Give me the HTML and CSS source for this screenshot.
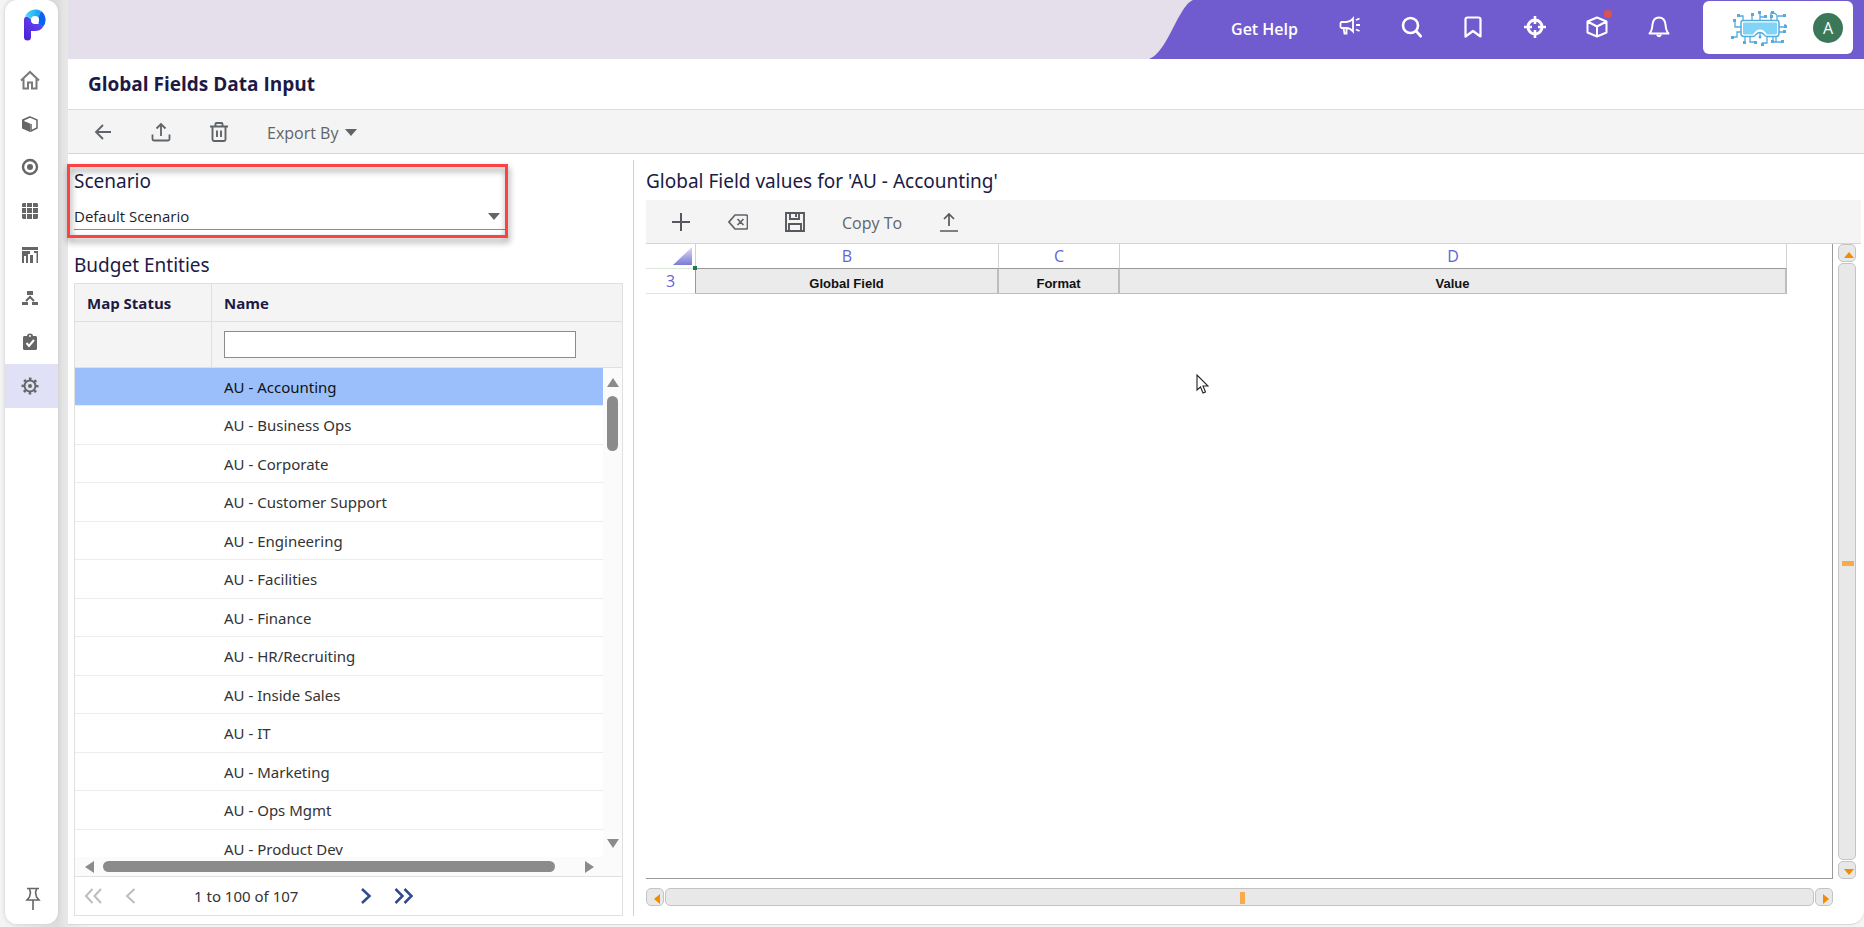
FILE: index.html
```html
<!DOCTYPE html>
<html lang="en">
<head>
<meta charset="utf-8">
<title>Global Fields Data Input</title>
<link rel="stylesheet" href="styles.css">
</head>
<body>
<nav class="sidebar" aria-label="Main">
  <a class="logo" href="#" aria-label="Home page">
    <svg width="22" height="32" viewBox="0 0 22 32">
      <defs>
        <linearGradient id="stem" x1="0" y1="1" x2="1" y2="0"><stop offset="0" stop-color="#4a1fd0"/><stop offset="1" stop-color="#6a4dff"/></linearGradient>
        <linearGradient id="arc" x1="0" y1="0" x2="1" y2="0"><stop offset="0" stop-color="#55dcf8"/><stop offset="1" stop-color="#0a9cf5"/></linearGradient>
      </defs>
      <path d="M0 11C0 8 2 7 4 8l4 3 3 4 5 0 3 3c-2 3-5 4-8 4H7v6a3.500 3.500 0 0 1-7 0z" fill="url(#stem)"/>
      <path d="M1 8A11 11 0 0 1 17 2L14 9a4 4 0 0 0-7 2C6 8 4 7 1 8z" fill="url(#arc)"/>
      <path d="M17 2a11 11 0 0 1 2 16l-5-4a4 4 0 0 0 0-5z" fill="#0b62f5"/>
      <circle cx="11" cy="11" r="4" fill="#fff"/>
    </svg>
  </a>
  <a class="nav-item" href="#" aria-label="Home"><svg width="20" height="20" viewBox="0 0 20 20" fill="none" stroke="#7a7a7a" stroke-width="2"><path d="M1 10.500 10 2l9 8.500M3.500 9v9.500H8v-6h4v6h4.500V9"/></svg></a>
  <a class="nav-item" href="#" aria-label="Models"><svg width="18" height="18" viewBox="0 0 18 18"><path d="M9 2 16 5v8l-6 3V9" fill="none" stroke="#666" stroke-width="1.500"/><path d="M9 1 1 4.500v9L9 17V8.500L3 6l6-3z" fill="#666"/><path d="m3 5.500 6-2.500 6 2.500L9 8z" fill="#fff"/></svg></a>
  <a class="nav-item" href="#" aria-label="Targets"><svg width="18" height="18" viewBox="0 0 18 18"><circle cx="9" cy="9" r="7" fill="none" stroke="#666" stroke-width="2.400"/><circle cx="9" cy="9" r="3" fill="#666"/></svg></a>
  <a class="nav-item" href="#" aria-label="Grids"><svg width="18" height="18" viewBox="0 0 18 18" fill="#666"><path d="M2 1h3v4H1V2zM6 1h5v4H6zM12 1h4l1 1v3h-5zM1 6h4v5H1zM6 6h5v5H6zM12 6h5v5h-5zM1 12h4v5H2l-1-1zM6 12h5v5H6zM12 12h5v4l-1 1h-4z"/></svg></a>
  <a class="nav-item" href="#" aria-label="Reports"><svg width="18" height="18" viewBox="0 0 18 18" fill="#666"><path d="M1 1h16v3H1zM1 5h8v3H7v9H5v-7H3v7H1zM9 9h3v8H9zM13 5h4v12h-1.500V7H13z"/></svg></a>
  <a class="nav-item" href="#" aria-label="Hierarchy"><svg width="18" height="18" viewBox="0 0 18 18" fill="#666"><path d="M6 2h6v4H6zM1 13h6v3H1zM11 13h6v3h-6z"/><path d="M9 7v2M5 12l4-4 4 4" fill="none" stroke="#666" stroke-width="2"/></svg></a>
  <a class="nav-item" href="#" aria-label="Tasks"><svg width="18" height="18" viewBox="0 0 18 18"><path d="M3 3h3a3 2.500 0 0 1 6 0h3l1 1v12l-1 1H3l-1-1V4z" fill="#666"/><path d="m5.500 10 2.500 3 5-6" fill="none" stroke="#fff" stroke-width="2"/><circle cx="9" cy="3" r="1" fill="#fff"/></svg></a>
  <a class="nav-item active" href="#" aria-label="Settings"><svg width="18" height="18" viewBox="0 0 18 18" fill="none" stroke="#666"><circle cx="9" cy="9" r="5.500" stroke-width="2"/><circle cx="9" cy="9" r="7.200" stroke-width="2.600" stroke-dasharray="2.500 3.155" stroke-dashoffset="1.250"/><circle cx="9" cy="9" r="2" fill="#666" stroke="none"/></svg></a>
  <button class="pin" aria-label="Pin menu"><svg width="16" height="24" viewBox="0 0 16 24" fill="none" stroke="#666" stroke-width="1.600"><path d="M2 1.500h12M4.500 2l1 3.500-1 4.500-2.500 3h12l-2.500-3-1-4.500 1-3.500M8 13v10"/></svg></button>
</nav>

<div class="app">
  <header class="topbar">
    <svg class="curve" width="44" height="59" viewBox="0 0 44 59" preserveAspectRatio="none"><path d="M0 59C14 54 24 26 31 15 35 8 39 2 44 0V59z" fill="#705ccf"/></svg>
    <div class="actions">
      <a class="help" href="#">Get Help</a>
      <button aria-label="Announcements"><svg width="22" height="22" viewBox="0 0 22 22" fill="none" stroke="#fff" stroke-width="1.800"><path d="M3.500 6h5C11 6 13 5 15 2.500v13C13 13 11 12 8.500 12h-5L2.500 11V7zM5.500 12l1 5.500h2V12M18 4l3.500-1.500M18 9h4M18 13.500l3.500 1.500"/></svg></button>
      <button aria-label="Search"><svg width="22" height="22" viewBox="0 0 22 22" fill="none" stroke="#fff" stroke-width="2.600"><circle cx="10.500" cy="9.500" r="7.500"/><path d="m16 15 5.500 6"/></svg></button>
      <button aria-label="Bookmarks"><svg width="22" height="22" viewBox="0 0 22 22" fill="none" stroke="#fff" stroke-width="2.200" stroke-linejoin="round"><path d="M3.500 20.500V3.500q0-2 2-2h11q2 0 2 2v17L11 15z"/></svg></button>
      <button aria-label="Locate"><svg width="22" height="22" viewBox="0 0 22 22" fill="none" stroke="#fff"><circle cx="11" cy="11" r="7" stroke-width="3"/><path d="M11 0v8M11 14v8M0 11h8M14 11h8" stroke-width="2.600"/></svg></button>
      <button aria-label="Packages"><svg width="22" height="22" viewBox="0 0 22 22" fill="none" stroke="#fff" stroke-width="2" stroke-linejoin="round"><path d="m11 1.500 9.500 4v11L11 20.500l-9.500-4v-11zM1.500 5.500l9.500 5 9.500-5M11 10.500v10"/></svg><span class="dot"></span></button>
      <button aria-label="Notifications"><svg width="22" height="22" viewBox="0 0 22 22" fill="none" stroke="#fff" stroke-width="2" stroke-linejoin="round"><path d="M1.500 17.500Q4 15 4.500 8.500C5 4 7.500 1.500 11 1.500s6 2.500 6.500 7q.5 6.500 3 9z"/><path d="M9 18.500q2 3.500 4 0"/></svg></button>
      <div class="account">
        <svg width="56" height="36" viewBox="0 0 56 36" fill="none" stroke="#54abdf" stroke-width="1.300">
          <path d="M12 10V6H7M12 17H4V11M10 22H6V27H1M14 26v7M19 26v6h6M36 26v7h-5M36 26v6M42 26v6h3M45 26v6h6M47 22h6M48 17h6v-3M46 14V6h7M40 10V3h3l3 2M40 10V6M29 10V3M29 7h5M21 10V4"/>
          <g fill="#54abdf" stroke="none"><path d="M6 4h3v3H6zM2 9h3v3H2zM0 26h3v3H0zM12 31h3v3h-3zM23 31h3v3h-3zM30 33h3v3h-3zM40 30h3v3h-3zM50 30h3v3h-3zM52 20h3v3h-3zM53 15h3v3h-3zM52 4h3v3h-3zM40 1h3v3h-3zM27 1h3v3h-3zM33 5h3v3h-3zM20 3h3v3h-3zM39 5h3v3h-3z"/></g>
          <path d="M12 10.500h34q2 0 2 2v11q0 3-3 3h-9q-2 0-3-2-4-4-8 0-1 2-3 2h-9q-3 0-3-3v-11q0-2 2-2z" fill="#fff" stroke-width="1.500"/>
          <path d="M13 12.500h32q1 0 1 1V23q0 1.500-2 1.500h-8q-3-5-7-5t-7 5h-8q-2 0-2-1.500v-9.500q0-1 1-1z" fill="#82d4f7" stroke="none"/>
          <path d="M29 22v6"/><circle cx="29" cy="27" r="1.500" fill="#54abdf" stroke="none"/>
        </svg>
        <button class="avatar" aria-label="Account">A</button>
      </div>
    </div>
  </header>

  <h1 class="title">Global Fields Data Input</h1>

  <div class="toolbar page-tools">
    <button aria-label="Back"><svg width="20" height="20" viewBox="0 0 20 20" fill="none" stroke="#5f6469" stroke-width="1.800"><path d="M18 10H3M10 3l-7 7 7 7"/></svg></button>
    <button aria-label="Upload"><svg width="20" height="20" viewBox="0 0 20 20" fill="none" stroke="#5f6469" stroke-width="1.800"><path d="M10 14V2M5.500 6.500 10 2l4.500 4.500M1.500 12.500V17q0 1.500 1.500 1.500h14q1.500 0 1.500-1.500v-4.500"/></svg></button>
    <button aria-label="Delete"><svg width="20" height="20" viewBox="0 0 20 20" fill="none" stroke="#5f6469" stroke-width="1.900"><path d="M1 4.500h18M6.500 4V2q0-1 1-1h5q1 0 1 1v2M3.500 5v12.500q0 1.500 1.500 1.500h10q1.500 0 1.500-1.500V5M8 8.500V15M12 8.500V15"/></svg></button>
    <button class="text">Export By <svg width="12" height="7" viewBox="0 0 12 7"><path d="M0 0h12L6 7z" fill="#5f6469"/></svg></button>
  </div>

  <main class="panes">
    <section class="left">
      <div class="scenario">
        <label class="heading" for="scenario">Scenario</label>
        <div class="select">
          <select id="scenario"><option>Default Scenario</option></select>
          <svg width="12" height="7" viewBox="0 0 12 7"><path d="M0 0h12L6 7z" fill="#5f656a"/></svg>
        </div>
        <span class="callout"></span>
      </div>
      <h2 class="heading entities-title">Budget Entities</h2>
      <div class="grid">
        <table class="grid-head">
          <colgroup><col class="col-status"><col></colgroup>
          <thead>
            <tr><th>Map Status</th><th>Name</th></tr>
            <tr class="filter"><td></td><td><input type="text" aria-label="Filter by name"></td></tr>
          </thead>
        </table>
        <div class="grid-body">
          <div class="rows">
            <table>
              <colgroup><col class="col-status"><col></colgroup>
              <tbody>
                <tr class="selected"><td></td><td>AU - Accounting</td></tr>
                <tr><td></td><td>AU - Business Ops</td></tr>
                <tr><td></td><td>AU - Corporate</td></tr>
                <tr><td></td><td>AU - Customer Support</td></tr>
                <tr><td></td><td>AU - Engineering</td></tr>
                <tr><td></td><td>AU - Facilities</td></tr>
                <tr><td></td><td>AU - Finance</td></tr>
                <tr><td></td><td>AU - HR/Recruiting</td></tr>
                <tr><td></td><td>AU - Inside Sales</td></tr>
                <tr><td></td><td>AU - IT</td></tr>
                <tr><td></td><td>AU - Marketing</td></tr>
                <tr><td></td><td>AU - Ops Mgmt</td></tr>
                <tr><td></td><td>AU - Product Dev</td></tr>
              </tbody>
            </table>
          </div>
          <div class="vscroll">
            <svg width="12" height="9" viewBox="0 0 12 9"><path d="M6 0l6 9H0z" fill="#8b8b8b"/></svg>
            <span class="thumb"></span>
            <svg class="end" width="12" height="9" viewBox="0 0 12 9"><path d="M0 0h12L6 9z" fill="#8b8b8b"/></svg>
          </div>
        </div>
        <div class="hscroll">
          <svg width="9" height="12" viewBox="0 0 9 12"><path d="M9 0v12L0 6z" fill="#8b8b8b"/></svg>
          <span class="thumb"></span>
          <svg class="end" width="9" height="12" viewBox="0 0 9 12"><path d="M0 0v12l9-6z" fill="#8b8b8b"/></svg>
        </div>
        <div class="pager">
          <button disabled aria-label="First page"><svg width="18" height="16" viewBox="0 0 18 16" fill="none" stroke="#bdbdbd" stroke-width="2"><path d="M8.500 1 2 8l6.500 7M17 1l-6.500 7 6.500 7"/></svg></button>
          <button disabled aria-label="Previous page"><svg width="12" height="16" viewBox="0 0 12 16" fill="none" stroke="#bdbdbd" stroke-width="2"><path d="M10.500 1 3 8l7.500 7"/></svg></button>
          <span class="range">1 to 100 of 107</span>
          <button aria-label="Next page"><svg width="12" height="16" viewBox="0 0 12 16" fill="none" stroke="#2f4a92" stroke-width="2.500"><path d="m2 1 7.500 7L2 15"/></svg></button>
          <button aria-label="Last page"><svg width="20" height="16" viewBox="0 0 20 16" fill="none" stroke="#2f4a92" stroke-width="2.500"><path d="m1.500 1 7 7-7 7M10.500 1l7 7-7 7"/></svg></button>
        </div>
      </div>
    </section>

    <section class="right">
      <h2 class="heading">Global Field values for 'AU - Accounting'</h2>
      <div class="toolbar sheet-tools">
        <button aria-label="Add"><svg width="20" height="20" viewBox="0 0 20 20" fill="none" stroke="#55595d" stroke-width="2"><path d="M10 1v18M1 10h18"/></svg></button>
        <button aria-label="Clear"><svg width="20" height="20" viewBox="0 0 20 20" fill="none" stroke="#5f6469" stroke-width="1.700"><path d="M7 3h11q1.500 0 1.500 1.500v11q0 1.500-1.500 1.500H7l-6-7zM9.500 7l6 6M15.500 7l-6 6"/></svg></button>
        <button aria-label="Save"><svg width="20" height="20" viewBox="0 0 20 20" fill="none" stroke="#55595d" stroke-width="1.900"><path d="M1 1h18v18H1zM5 1v6h9V1M4 19v-7h12v7M11 2v3"/></svg></button>
        <button class="text">Copy To</button>
        <button aria-label="Export"><svg width="20" height="20" viewBox="0 0 20 20" fill="none" stroke="#55595d" stroke-width="1.700"><path d="M10 14V2M5 7l5-5 5 5M1 19h18"/></svg></button>
      </div>
      <div class="sheet">
        <div class="viewport">
          <table class="cells">
            <colgroup><col class="c-a"><col class="c-b"><col class="c-c"><col class="c-d"></colgroup>
            <thead><tr><th class="corner"><svg width="19" height="18" viewBox="0 0 19 18"><defs><linearGradient id="tri" x1="0" y1="0" x2="0" y2="1"><stop offset="0" stop-color="#dcdcf4"/><stop offset="1" stop-color="#7b7bd8"/></linearGradient></defs><path d="M19 0v18H0z" fill="url(#tri)"/></svg><span class="handle"></span></th><th>B</th><th>C</th><th>D</th></tr></thead>
            <tbody><tr><th>3</th><td>Global Field</td><td>Format</td><td>Value</td></tr></tbody>
          </table>
          <svg class="cursor" width="13" height="20" viewBox="0 0 13 20"><path d="M1 1v15l3.500-3 2.500 6 2.500-1-2.500-6H12z" fill="#fff" stroke="#222" stroke-width="1.100"/></svg>
        </div>
        <div class="bar vertical">
          <button aria-label="Scroll up"><svg width="10" height="6" viewBox="0 0 10 6"><path d="m5 0 5 6H0z" fill="#f28c00"/></svg></button>
          <div class="track"><span></span></div>
          <button aria-label="Scroll down"><svg width="10" height="6" viewBox="0 0 10 6"><path d="M0 0h10L5 6z" fill="#f28c00"/></svg></button>
        </div>
        <div class="bar horizontal">
          <button aria-label="Scroll left"><svg width="6" height="10" viewBox="0 0 6 10"><path d="M6 0v10L0 5z" fill="#f28c00"/></svg></button>
          <div class="track"><span></span></div>
          <button aria-label="Scroll right"><svg width="6" height="10" viewBox="0 0 6 10"><path d="M0 0v10l6-5z" fill="#f28c00"/></svg></button>
        </div>
      </div>
    </section>
  </main>
</div>
</body>
</html>
```
FILE: styles.css
```css
* { box-sizing: border-box; }
body {
  margin: 0;
  height: 100vh;
  display: flex;
  padding: 0 0 3px 5px;
  gap: 10px;
  background: linear-gradient(90deg, #f4f4f4 5px, #dedede 58px, #e9e9e9 68px, #f4f4f4 90px);
  font: 16px/22px "Open Sans", "Noto Sans", sans-serif;
  color: #333;
  overflow: hidden;
}
button {
  font: inherit;
  color: inherit;
  background: none;
  border: 0;
  padding: 0;
  cursor: pointer;
}
svg { display: block; flex: none; }
table { border-collapse: separate; border-spacing: 0; table-layout: fixed; }
th, td { padding: 0; text-align: left; }

.sidebar {
  flex: 0 0 53px;
  display: flex;
  flex-direction: column;
  background: #fff;
  border-radius: 12px;
  box-shadow: 0 0 4px #ccc;
}
.logo { display: flex; justify-content: center; padding: 9px 0 17px 6px; }
.nav-item {
  height: 44px;
  display: flex;
  align-items: center;
  justify-content: center;
  padding-right: 4px;
}
.nav-item:nth-child(3n) { height: 43px; }
.nav-item.active { height: 44px; background: #e0e0f6; }
.pin { margin: auto 0 13px; padding-left: 3px; display: flex; justify-content: center; }

.app {
  flex: 1;
  min-width: 0;
  display: flex;
  flex-direction: column;
  background: #fff;
  border-radius: 0 0 14px 0;
  box-shadow: 0 1px 1px #d5d5d5;
}
.topbar { display: flex; height: 59px; flex: none; background: #e5dfeb; }
.curve { margin-left: auto; }
.actions {
  display: flex;
  align-items: flex-start;
  gap: 40px;
  padding: 1px 11px 0 38px;
  background: #705ccf;
}
.actions > button { position: relative; margin-top: 15px; }
.help { margin-top: 17px; color: #fff; font-weight: 600; text-decoration: none; }
.dot {
  position: absolute;
  top: -6px;
  right: -4px;
  width: 8px;
  height: 8px;
  border-radius: 50%;
  background: #d9534f;
}
.account {
  display: flex;
  align-items: center;
  gap: 26px;
  height: 53px;
  margin-left: -7px;
  padding: 0 10px 0 28px;
  border-radius: 6px;
  background: #fff;
}
.avatar {
  width: 30px;
  height: 30px;
  border-radius: 50%;
  background: #3b7859;
  color: #fff;
  line-height: 30px;
}

.title {
  flex: none;
  margin: 0;
  padding: 0 20px;
  font-size: 19px;
  line-height: 50px;
  font-weight: 700;
  color: #1c1a45;
}
.toolbar { display: flex; align-items: center; background: #f4f4f4; color: #5f6469; flex: none; }
.toolbar .text { display: flex; align-items: center; gap: 7px; padding-top: 2px; font-weight: 500; }
.page-tools {
  height: 45px;
  gap: 38px;
  padding: 0 25px;
  border-top: 1px solid #dcdcdc;
  border-bottom: 1px solid #d5d5d5;
}
.sheet-tools { height: 44px; gap: 37px; padding: 0 25px; border-bottom: 1px solid #d5d5d5; }

.panes { flex: 1; min-height: 0; display: flex; padding: 6px 3px 8px 6px; }
.heading {
  display: block;
  margin: 0;
  font-family: "Noto Sans", "Open Sans", sans-serif;
  font-size: 19px;
  line-height: 24px;
  font-weight: 400;
  color: #1c1a45;
}
.left {
  flex: 0 0 560px;
  display: flex;
  flex-direction: column;
  padding-right: 10px;
  border-right: 1px solid #d0d0d0;
}
.scenario { position: relative; width: 431px; padding-top: 9px; }
.select {
  display: flex;
  align-items: center;
  height: 37px;
  padding: 10px 5px 0 0;
  border-bottom: 1px solid #8c8c8c;
}
.select select {
  flex: 1;
  appearance: none;
  border: 0;
  padding: 0;
  background: none;
  font: inherit;
  font-size: 15px;
  color: #1f1f1f;
}
.callout {
  position: absolute;
  inset: 4px -3px -8px -7px;
  border: 3px solid #fa4444;
  filter: drop-shadow(1px 4px 3px rgba(0, 0, 0, .45));
  pointer-events: none;
}
.entities-title { margin: 23px 0 6px; }

.grid { flex: 1; min-height: 0; display: flex; flex-direction: column; border: 1px solid #e0e0e0; }
.grid table { width: 100%; }
.col-status { width: 137px; }
.grid-head { flex: none; background: #f4f4f4; }
.grid-head th { height: 38px; font-size: 15px; font-weight: 700; color: #1c1a45; border-bottom: 1px solid #e0e0e0; }
.grid-head td { border-bottom: 1px solid #e0e0e0; }
.grid th, .grid td { padding: 0 12px; }
.grid-head tr > :first-child { border-right: 1px solid #e0e0e0; }
.filter { height: 46px; }
.filter input { display: block; width: calc(100% - 34px); height: 27px; border: 1px solid #8c8c8c; background: #fff; font: inherit; }
.grid-body { flex: 1; min-height: 0; display: flex; }
.rows { flex: 1; overflow: hidden; }
.rows td {
  height: 39px;
  border-bottom: 1px solid #ececec;
  font-family: "Noto Sans", "Open Sans", sans-serif;
  font-size: 15px;
  line-height: 20px;
  white-space: nowrap;
}
.rows tr:nth-child(odd) td { height: 38px; }
.selected { background: #9bbffb; color: #111; }
.vscroll { flex: 0 0 19px; display: flex; flex-direction: column; align-items: center; gap: 9px; padding: 10px 0 9px; background: #fbfbfb; }
.vscroll .thumb { width: 11px; height: 55px; border-radius: 6px; background: #8b8b8b; }
.vscroll .end { margin-top: auto; }
.hscroll { height: 19px; flex: none; display: flex; align-items: center; gap: 9px; padding: 0 28px 0 10px; background: #fbfbfb; }
.hscroll .thumb { flex: 0 0 452px; height: 11px; border-radius: 6px; background: #8b8b8b; }
.hscroll .end { margin-left: auto; }
.pager {
  height: 39px;
  flex: none;
  display: flex;
  align-items: center;
  padding: 0 9px;
  border-top: 1px solid #e0e0e0;
  font-family: "Noto Sans", "Open Sans", sans-serif;
  font-size: 15px;
}
.pager button { margin-right: 22px; }
.range { margin: 0 62px 0 36px; }

.right { flex: 1; min-width: 0; display: flex; flex-direction: column; margin-left: 12px; padding-top: 9px; }
.right > .heading { margin-bottom: 7px; }
.sheet {
  flex: 1;
  min-height: 0;
  display: grid;
  grid-template: minmax(0, 1fr) 18px / minmax(0, 1fr) 18px;
  gap: 9px 5px;
  padding: 0 5px 10px 0;
}
.viewport { position: relative; overflow: hidden; border-right: 1px solid #999; border-bottom: 1px solid #999; }
.cells { width: 1141px; font-size: 16px; }
.c-a { width: 50px; }
.c-b { width: 303px; }
.c-c { width: 121px; }
.cells th, .cells td { height: 25px; text-align: center; }
.cells th { color: #6464d4; font-weight: 400; border-right: 1px solid #ccd6cc; }
.cells thead th { border-bottom: 1px solid #999; line-height: 20px; }
.cells .corner { position: relative; border-bottom-color: #dde8dd; }
.corner svg { margin-left: auto; margin-right: 3px; }
.handle { position: absolute; right: -2px; bottom: -2px; width: 4px; height: 4px; background: #1f7a4c; }
.cells tbody th { border-bottom: 1px solid #dde8dd; border-right-color: #999; }
.cells td {
  padding-top: 6px;
  background: #ebebeb;
  border-right: 2px solid #bdbdbd;
  border-bottom: 1px solid #bdbdbd;
  color: #111;
  font: bold 13px/16px "Liberation Sans", Arial, sans-serif;
}
.cursor { position: absolute; left: 550px; top: 130px; }
.bar { display: flex; gap: 1px; }
.vertical { flex-direction: column; }
.bar button, .track {
  display: flex;
  align-items: center;
  justify-content: center;
  background: #e8e8e8;
  border: 1px solid #c4c4c4;
  border-radius: 5px;
}
.bar button { flex: 0 0 18px; padding: 4px 0 0 3px; }
.track { flex: 1; }
.track span { background: #f7ab4b; }
.vertical .track { padding: 3px 0 0 2px; }
.vertical .track span { width: 12px; height: 5px; }
.horizontal .track { padding: 2px 0 0 5px; }
.horizontal .track span { width: 5px; height: 12px; }
```
